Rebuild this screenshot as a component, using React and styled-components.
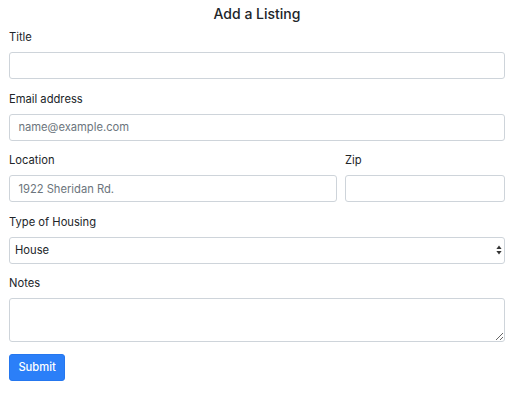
import React from 'react';
import styled, { createGlobalStyle } from 'styled-components';

const GlobalStyle = createGlobalStyle`
  body {
    margin: 0;
    background: #fff;
    font-family: Inter, 'Noto Sans', sans-serif;
    color: #212529;
  }
`;

const App = () => (
  <>
    <GlobalStyle />
    <Wrapper>
      <Heading>Add a Listing</Heading>
      <form onSubmit={(e) => e.preventDefault()}>
        <Group>
          <Label htmlFor="title">Title</Label>
          <Input id="title" type="text" />
        </Group>
        <Group>
          <Label htmlFor="email">Email address</Label>
          <Input id="email" type="email" placeholder="name@example.com" />
        </Group>
        <Row>
          <Group>
            <Label htmlFor="location">Location</Label>
            <Input id="location" type="text" placeholder="1922 Sheridan Rd." />
          </Group>
          <Group>
            <Label htmlFor="zip">Zip</Label>
            <Input id="zip" type="text" />
          </Group>
        </Row>
        <Group>
          <Label htmlFor="housing">Type of Housing</Label>
          <SelectWrapper>
            <Select id="housing" defaultValue="House">
              <option>House</option>
              <option>Apartment</option>
              <option>Condo</option>
            </Select>
            <Arrows width="6" height="10" viewBox="0 0 6 10">
              <path d="M3 0.5 L5.6 4 H0.4 Z" fill="#333" />
              <path d="M3 9.5 L5.6 6 H0.4 Z" fill="#333" />
            </Arrows>
          </SelectWrapper>
        </Group>
        <Group>
          <Label htmlFor="notes">Notes</Label>
          <TextArea id="notes" />
        </Group>
        <Button type="submit">Submit</Button>
      </form>
    </Wrapper>
  </>
);

const Wrapper = styled.div`
  padding: 4px 7px 0 9px;
`;

const Heading = styled.h5`
  margin: 0 0 5px;
  font-size: 14px;
  font-weight: 500;
  line-height: 20px;
  text-align: center;
`;

const Group = styled.div`
  margin-bottom: 11.5px;
`;

const Row = styled.div`
  display: grid;
  grid-template-columns: calc((100% + 8px) * 2 / 3 - 8px) 1fr;
  column-gap: 8px;
`;

const Label = styled.label`
  display: block;
  font-size: 11.2px;
  line-height: 17px;
  margin-bottom: 6px;
`;

const fieldStyles = `
  display: block;
  width: 100%;
  box-sizing: border-box;
  font-family: Inter, 'Noto Sans', sans-serif;
  font-size: 11.2px;
  color: #495057;
  background: #fff;
  border: 1px solid #ced4da;
  border-radius: 3px;
  outline: none;
`;

const Input = styled.input`
  ${fieldStyles}
  height: 27px;
  padding: 0 8.4px;

  &::placeholder {
    color: #6c757d;
    opacity: 1;
  }
`;

const SelectWrapper = styled.div`
  position: relative;
`;

const Select = styled.select`
  ${fieldStyles}
  height: 27px;
  padding: 0 5px;
  color: #212529;
  appearance: none;
`;

const Arrows = styled.svg`
  position: absolute;
  right: 3px;
  top: 8.5px;
  pointer-events: none;
`;

const TextArea = styled.textarea`
  ${fieldStyles}
  height: 44px;
  padding: 4px 8.4px;
  resize: vertical;
`;

const Button = styled.button`
  display: inline-block;
  height: 27px;
  padding: 0 8.4px;
  font-family: Inter, 'Noto Sans', sans-serif;
  font-size: 11.2px;
  font-weight: 500;
  color: #fff;
  background: #2b7ff8;
  border: 1px solid #2577ef;
  border-radius: 3px;
  cursor: pointer;
`;

export default App;
